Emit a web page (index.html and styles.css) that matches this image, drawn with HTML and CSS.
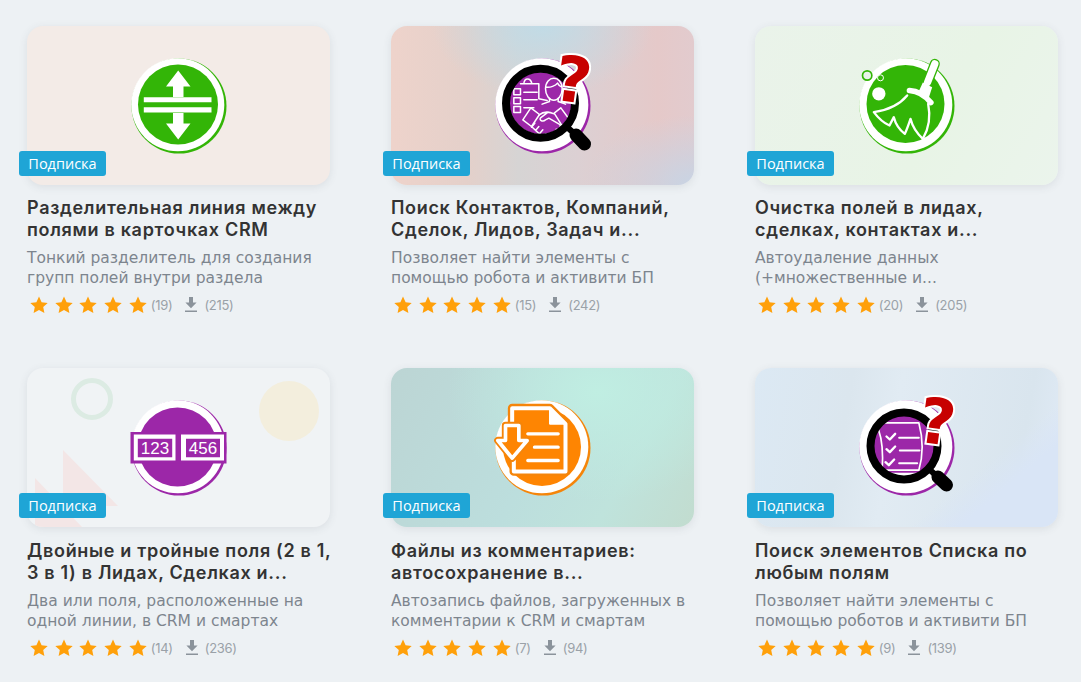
FILE: index.html
```html
<!DOCTYPE html>
<html lang="ru">
<head>
<meta charset="utf-8">
<title>Приложения</title>
<link rel="stylesheet" href="styles.css">
</head>
<body>
<svg class="defs" aria-hidden="true">
  <symbol id="star" viewBox="0 0 18 18"><path d="M9 .6l2.6 5.6 6.1.7-4.5 4.2 1.2 6L9 14.1l-5.4 3 1.2-6L.3 6.9l6.1-.7z"/></symbol>
  <symbol id="dl" viewBox="0 0 14 16"><path d="M5 0h4v5.5h3.6L7 11.2 1.4 5.500H5zM1 13.500h12V15H1z"/></symbol>
</svg>
<main class="grid">

  <article class="card">
    <div class="thumb t1">
      <svg class="icon" viewBox="0 0 100 100">
        <circle cx="50" cy="50" r="47.500" fill="#33b507"/>
        <circle cx="48.800" cy="48.800" r="46.500" fill="#fff"/>
        <circle cx="49" cy="48.500" r="40" fill="#33b507"/>
        <path fill="#fff" d="M49.200 14.500L61.500 30.500H54.500V41H44V30.500H37z"/>
        <path fill="#fff" d="M49.200 83.500L61.500 67.500H54.500V57H44V67.500H37z"/>
        <path fill="#fff" d="M14.800 41.300H82.500V46.300H14.800zM14.800 51.200H82.500V56.500H14.800z"/>
      </svg>
      <span class="badge">Подписка</span>
    </div>
    <h2 class="title">Разделительная линия между полями в карточках CRM</h2>
    <p class="desc">Тонкий разделитель для создания групп полей внутри раздела</p>
    <div class="meta">
      <span class="stars"><svg class="star"><use href="#star"/></svg><svg class="star"><use href="#star"/></svg><svg class="star"><use href="#star"/></svg><svg class="star"><use href="#star"/></svg><svg class="star"><use href="#star"/></svg></span>
      <span class="count">(19)</span>
      <svg class="dl"><use href="#dl"/></svg>
      <span class="count">(215)</span>
    </div>
  </article>

  <article class="card">
    <div class="thumb t2">
      <svg class="icon" viewBox="0 0 100 100">
        <circle cx="50" cy="50" r="47.500" fill="#9c27a8"/>
        <circle cx="48.800" cy="48.800" r="46.500" fill="#fff"/>
        <circle cx="47.500" cy="47.200" r="31" fill="#9c27a8"/>
        <g transform="translate(12.500,14.500) scale(.3333)" fill="none" stroke="#fff" stroke-width="4.500" stroke-linecap="round" stroke-linejoin="round">
          <path d="M45 40H100V85L125 90M55 39c2-18 20-18 24 0"/>
          <path d="M25 55h20v18H25zM25 82h20v18H25zM25 108h20v18H25zM55 65h40M55 88h40M55 112h30"/>
          <path d="M120 55c0-42 50-42 50 0c0 20-12 34-25 34s-25-14-25-34zM122 50c12 2 28-4 34-12c3 6 8 10 13 12"/>
          <path d="M132 85v8l-22 8M158 85v8l22 8"/>
          <path d="M52 148L76 112L102 132L78 168ZM146 128L166 112L194 150L170 166Z"/>
          <path d="M100 134C112 124 128 122 146 130M128 125L105 142C100 150 112 155 120 148L130 143L170 166"/>
          <path d="M78 168L108 196C114 202 124 198 120 190M120 192L132 200C140 203 146 195 142 188M142 190C150 192 156 184 152 176M152 178C160 178 166 172 164 164M88 158L78 170M100 168L90 180M112 178L102 190"/>
        </g>
        <circle cx="47.500" cy="47.200" r="34.500" fill="none" stroke="#000" stroke-width="8"/>
        <path d="M74 71L84 80" stroke="#000" stroke-width="6"/>
        <path d="M83 79L91.500 88" stroke="#000" stroke-width="13" stroke-linecap="round"/>
        <text class="q" x="80" y="46" transform="rotate(8 80 25)">?</text>
      </svg>
      <span class="badge">Подписка</span>
    </div>
    <h2 class="title">Поиск Контактов, Компаний, Сделок, Лидов, Задач и...</h2>
    <p class="desc">Позволяет найти элементы с помощью робота и активити БП</p>
    <div class="meta">
      <span class="stars"><svg class="star"><use href="#star"/></svg><svg class="star"><use href="#star"/></svg><svg class="star"><use href="#star"/></svg><svg class="star"><use href="#star"/></svg><svg class="star"><use href="#star"/></svg></span>
      <span class="count">(15)</span>
      <svg class="dl"><use href="#dl"/></svg>
      <span class="count">(242)</span>
    </div>
  </article>

  <article class="card">
    <div class="thumb t3">
      <svg class="icon" viewBox="0 0 100 100">
        <circle cx="50" cy="50" r="47.500" fill="#33b507"/>
        <circle cx="48.800" cy="48.800" r="46.500" fill="#fff"/>
        <circle cx="48.500" cy="48" r="39" fill="#33b507"/>
        <g transform="translate(8.500,4.500) scale(.3333)">
          <circle cx="5" cy="45" r="14" fill="#e9f3e9" stroke="#33b507" stroke-width="5"/>
          <circle cx="45" cy="52" r="9" fill="#33b507" stroke="#fff" stroke-width="3"/>
          <circle cx="40" cy="100" r="20" fill="#fff"/>
          <path d="M208 10L186 66" stroke="#33b507" stroke-width="30" stroke-linecap="round"/>
          <path d="M208 10L186 66" stroke="#fff" stroke-width="22" stroke-linecap="round"/>
          <path d="M132 90Q168 92 196 126" fill="none" stroke="#fff" stroke-width="17" stroke-linecap="round"/>
          <path d="M172 66L200 80L190 112L160 92z" fill="#fff"/>
          <path d="M125 105C100 135 60 150 25 155C40 175 60 190 72 195L85 170C90 190 105 210 118 220C125 205 130 190 135 175C140 195 150 215 172 235C190 205 195 165 188 130" fill="none" stroke="#fff" stroke-width="7" stroke-linejoin="round" stroke-linecap="round"/>
        </g>
      </svg>
      <span class="badge">Подписка</span>
    </div>
    <h2 class="title">Очистка полей в лидах, сделках, контактах и...</h2>
    <p class="desc">Автоудаление данных (+множественные и...</p>
    <div class="meta">
      <span class="stars"><svg class="star"><use href="#star"/></svg><svg class="star"><use href="#star"/></svg><svg class="star"><use href="#star"/></svg><svg class="star"><use href="#star"/></svg><svg class="star"><use href="#star"/></svg></span>
      <span class="count">(20)</span>
      <svg class="dl"><use href="#dl"/></svg>
      <span class="count">(205)</span>
    </div>
  </article>

  <article class="card">
    <div class="thumb t4">
      <svg class="decor" viewBox="0 0 303 159">
        <circle cx="65" cy="31" r="18.500" fill="none" stroke="#dcebe3" stroke-width="5"/>
        <circle cx="262" cy="43" r="30" fill="#f3eedd"/>
        <path d="M36 82L91 138H36z" fill="#f3e6e6"/>
        <path d="M8 110L55 159H8z" fill="#f3e6e6"/>
      </svg>
      <svg class="icon" viewBox="0 0 100 100">
        <circle cx="50" cy="50" r="47.500" fill="#9c27a8"/>
        <circle cx="48.800" cy="48.800" r="46.500" fill="#fff"/>
        <circle cx="48.500" cy="49" r="39.500" fill="#9c27a8"/>
        <path fill="#9c27a8" d="M1.500 34H97.500V65.500H1.500z"/>
        <path fill="#fff" d="M4.800 36.500H46.500V62.500H4.800zM52 36.500H95V62.500H52z"/>
        <path fill="#9c27a8" d="M8.800 40.800H43.200V59.200H8.800zM57 40.800H91V59.200H57z"/>
        <text class="num" x="26" y="55.800">123</text>
        <text class="num" x="74" y="55.800">456</text>
      </svg>
      <span class="badge">Подписка</span>
    </div>
    <h2 class="title">Двойные и тройные поля (2 в 1, 3 в 1) в Лидах, Сделках и...</h2>
    <p class="desc">Два или поля, расположенные на одной линии, в CRM и смартах</p>
    <div class="meta">
      <span class="stars"><svg class="star"><use href="#star"/></svg><svg class="star"><use href="#star"/></svg><svg class="star"><use href="#star"/></svg><svg class="star"><use href="#star"/></svg><svg class="star"><use href="#star"/></svg></span>
      <span class="count">(14)</span>
      <svg class="dl"><use href="#dl"/></svg>
      <span class="count">(236)</span>
    </div>
  </article>

  <article class="card">
    <div class="thumb t5">
      <svg class="icon" viewBox="0 0 100 100">
        <circle cx="50" cy="50" r="47.500" fill="#f5850a"/>
        <circle cx="48.800" cy="48.800" r="46.500" fill="#fff"/>
        <circle cx="49" cy="49" r="39" fill="#fe8502"/>
        <g transform="translate(-22.500,-12.500) scale(.3333)" stroke-linejoin="round" stroke-linecap="round">
          <path d="M125 120V68H238L285 115V258H130V225" fill="#fe8502" stroke="#f5850a" stroke-width="26"/>
          <path d="M125 120V68H238L285 115V258H130V225" fill="#fe8502" stroke="#fff" stroke-width="12"/>
          <path d="M238 72V115H282" fill="#fff" stroke="#fff" stroke-width="5"/>
          <path d="M105 120H145V165H170L125 218L82 165H105z" fill="#fe8502" stroke="#f5850a" stroke-width="22"/>
          <path d="M105 120H145V165H170L125 218L82 165H105z" fill="#fe8502" stroke="#fff" stroke-width="11"/>
          <path d="M172 145H263M192 185H263M172 225H263" fill="none" stroke="#fff" stroke-width="10"/>
        </g>
      </svg>
      <span class="badge">Подписка</span>
    </div>
    <h2 class="title">Файлы из комментариев: автосохранение в...</h2>
    <p class="desc">Автозапись файлов, загруженных в комментарии к CRM и смартам</p>
    <div class="meta">
      <span class="stars"><svg class="star"><use href="#star"/></svg><svg class="star"><use href="#star"/></svg><svg class="star"><use href="#star"/></svg><svg class="star"><use href="#star"/></svg><svg class="star"><use href="#star"/></svg></span>
      <span class="count">(7)</span>
      <svg class="dl"><use href="#dl"/></svg>
      <span class="count">(94)</span>
    </div>
  </article>

  <article class="card">
    <div class="thumb t6">
      <svg class="icon" viewBox="0 0 100 100">
        <circle cx="50" cy="50" r="47.500" fill="#9c27a8"/>
        <circle cx="48.800" cy="48.800" r="46.500" fill="#fff"/>
        <circle cx="47" cy="48" r="31" fill="#9c27a8"/>
        <g transform="translate(-16.500,-12.500) scale(.3333)" fill="none" stroke="#fff" stroke-linecap="round" stroke-linejoin="round">
          <path d="M122 112H235C248 160 248 210 235 254H125C128 210 124 160 114 132" stroke-width="5"/>
          <path d="M125 262H255C240 285 200 295 180 290C160 288 140 278 125 262z" fill="#fff" stroke="none"/>
          <path d="M138 153l10 9 16-17M138 191l10 9 16-17M135 230l10 9 16-17" stroke-width="7"/>
          <path d="M176 157H235M178 195H237M176 233H230" stroke-width="6"/>
        </g>
        <circle cx="47" cy="48" r="33.500" fill="none" stroke="#000" stroke-width="8"/>
        <path d="M73 72L82 80" stroke="#000" stroke-width="6"/>
        <path d="M81 79L89.500 87" stroke="#000" stroke-width="13" stroke-linecap="round"/>
        <text class="q" x="80" y="46" transform="rotate(8 80 25)">?</text>
      </svg>
      <span class="badge">Подписка</span>
    </div>
    <h2 class="title">Поиск элементов Списка по любым полям</h2>
    <p class="desc">Позволяет найти элементы с помощью роботов и активити БП</p>
    <div class="meta">
      <span class="stars"><svg class="star"><use href="#star"/></svg><svg class="star"><use href="#star"/></svg><svg class="star"><use href="#star"/></svg><svg class="star"><use href="#star"/></svg><svg class="star"><use href="#star"/></svg></span>
      <span class="count">(9)</span>
      <svg class="dl"><use href="#dl"/></svg>
      <span class="count">(139)</span>
    </div>
  </article>

</main>
</body>
</html>
```
FILE: styles.css
```css
* { box-sizing: border-box; }
html, body { margin: 0; height: 100%; overflow: hidden; }
body {
  background: #edf1f4;
  font-family: "Inter", "Noto Sans", sans-serif;
  color: #333;
}
.defs { display: none; }
.grid {
  display: grid;
  grid-template-columns: repeat(3, 303px);
  column-gap: 61px;
  row-gap: 53.200px;
  padding: 26px 0 0 27px;
}
.card { display: flex; flex-direction: column; }
.thumb {
  position: relative;
  height: 159px;
  border-radius: 16px;
  box-shadow: 0 2px 8px rgba(60, 70, 80, .1);
  display: flex;
  align-items: center;
  justify-content: center;
}
.t1 { background: #f3ebe7; }
.t2 {
  background:
    radial-gradient(110px 70px at 50% 0, #c1dbe6 0, rgba(193, 219, 230, 0) 100%),
    radial-gradient(110px 70px at 100% 100%, #c8d4e4 0, rgba(200, 212, 228, 0) 100%),
    linear-gradient(90deg, #eed3cb 0, #e4d0ca 25%, #d6d4d4 42%, #dcd0d3 62%, #e5c9c9 88%, #e2cbce 100%);
}
.t3 { background: linear-gradient(120deg, #eaf3ea, #e8f4e6 60%, #ebf4ec); }
.t4 { background: #f0f3f5; }
.t5 {
  background:
    radial-gradient(150px 110px at 68% 15%, #c0eee2 0, rgba(192, 238, 226, 0) 100%),
    linear-gradient(120deg, #bcd5d4 0, #bcdedd 50%, #bfe3dc 75%, #c2dccf 100%);
}
.t6 {
  background:
    linear-gradient(140deg, rgba(255, 255, 255, 0) 70%, #d9e5f6 80%),
    linear-gradient(100deg, #dce9f4 0, #dbe6ee 30%, #e1ebf3 45%, #d9e5ee 85%, #e1ebf7 100%);
}
.decor { position: absolute; inset: 0; width: 100%; height: 100%; border-radius: 16px; }
.icon { position: relative; width: 100px; height: 100px; display: block; overflow: visible; }
.q {
  font: 700 63px "DejaVu Sans", sans-serif;
  text-anchor: middle;
  fill: #c70000;
  stroke: #fff;
  stroke-width: 4px;
  paint-order: stroke;
}
.num {
  font: 400 17px "Liberation Sans", Arial, sans-serif;
  text-anchor: middle;
  fill: #fff;
}
.badge {
  position: absolute;
  left: -8px;
  bottom: 9px;
  height: 25px;
  width: 87px;
  border-radius: 3px;
  background: #1fa5d6;
  color: #fff;
  font: 400 14.500px/25px "Open Sans", sans-serif;
  text-align: center;
}
.title {
  margin: 12.200px -8px 0 0;
  font-size: 18px;
  font-weight: 600;
  line-height: 22px;
  color: #333;
  letter-spacing: .68px;
}
.desc {
  margin: 7px 0 0;
  font-family: "DejaVu Sans", sans-serif;
  font-size: 15.500px;
  font-weight: 400;
  line-height: 20px;
  color: #7d858e;
}
.meta {
  margin: 7px 0 0 3px;
  height: 20px;
  display: flex;
  align-items: center;
}
.stars { display: flex; gap: 6.700px; }
.star { width: 18px; height: 18px; fill: #ffa00a; display: block; }
.count { font-size: 13px; color: #9aa1a8; letter-spacing: -.3px; margin-left: 4px; }
.dl { width: 14px; height: 16px; fill: #8b939b; margin: 0 2px 0 12px; }
```
